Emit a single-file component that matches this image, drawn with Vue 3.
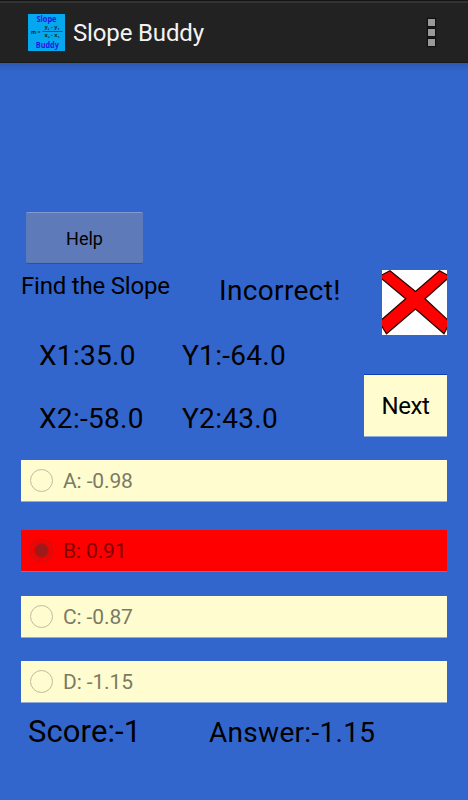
<template>
  <div class="app">
    <header class="action-bar">
      <svg class="logo" width="37" height="37" viewBox="0 0 37 37">
        <rect width="37" height="37" fill="#05a7ef" />
        <g class="logo-name">
          <text x="8.5" y="8" textLength="20" lengthAdjust="spacingAndGlyphs">Slope</text>
          <text x="7.8" y="34.2" textLength="23" lengthAdjust="spacingAndGlyphs">Buddy</text>
        </g>
        <g class="logo-formula">
          <text x="3" y="19.8" textLength="9.500" lengthAdjust="spacingAndGlyphs">m =</text>
          <text x="16.500" y="15" textLength="15" lengthAdjust="spacingAndGlyphs">y₂ - y₁</text>
          <text x="16.500" y="23.2" textLength="15" lengthAdjust="spacingAndGlyphs">x₂ - x₁</text>
        </g>
        <path d="M14.5 17.500H34.500" stroke="#123b55" stroke-width=".8" />
      </svg>
      <h1>Slope Buddy</h1>
      <div class="overflow"><i></i><i></i><i></i></div>
    </header>

    <main>
      <button class="help">Help</button>

      <section class="question">
        <div class="problem">
          <div class="prompt">
            <span class="find">Find the Slope</span>
            <span class="verdict">Incorrect!</span>
          </div>
          <div class="points">
            <span v-for="p in points" :key="p">{{ p }}</span>
          </div>
        </div>
        <div class="side">
          <svg class="cross" width="65" height="65" viewBox="0 0 65 65">
            <rect width="65" height="65" fill="#fff" />
            <path d="M8 .8L33.500 21.500L57.500 .8L68 6.500L43 28.800L68 52L62 63.800L33.500 39L4.500 63.800L-3 52L23.700 28.800L-3 6.500Z" fill="#fe0000" stroke="#220500" stroke-width="1.200" />
          </svg>
          <button class="next">Next</button>
        </div>
      </section>

      <div class="choices">
        <div v-for="c in choices" :key="c.text" class="choice" :class="{ wrong: c.picked }">
          <span class="radio"></span>
          <span class="label">{{ c.text }}</span>
        </div>
      </div>

      <footer>
        <span class="score">Score:-1</span>
        <span class="answer">Answer:-1.15</span>
      </footer>
    </main>
  </div>
</template>

<script setup>
const points = ['X1:35.0', 'Y1:-64.0', 'X2:-58.0', 'Y2:43.0']

const choices = [
  { text: 'A: -0.98' },
  { text: 'B: 0.91', picked: true },
  { text: 'C: -0.87' },
  { text: 'D: -1.15' }
]
</script>

<style>
body { margin: 0; background: #3366cc; }
</style>

<style scoped>
.app { width: 468px; height: 800px; overflow: hidden; background: #3366cc; font-family: Roboto, "Noto Sans", sans-serif; color: #000; white-space: nowrap; }
button { font-family: inherit; color: inherit; padding: 0; border: 0; border-radius: 0; display: block; }

.action-bar { display: flex; align-items: center; box-sizing: border-box; height: 63px; padding: 2px 33px 0 28px; background: #222; border-top: 1px solid #141414; border-bottom: 1px solid #171915; box-shadow: inset 0 2px #333; }
.action-bar h1 { margin: 1px auto 0 8px; font-size: 24px; font-weight: 400; line-height: 38px; letter-spacing: -0.15px; color: #f3f3f3; }
.logo { display: block; }
.logo-name { font: bold 8.8px "Open Sans", sans-serif; fill: #2814e8; }
.logo-formula { font: bold 5.6px "Open Sans", sans-serif; fill: #082c40; }
.overflow { display: flex; flex-direction: column; gap: 3px; }
.overflow i { width: 7px; height: 7px; background: #999; box-shadow: 0 0 1px 1px #111; }

main { height: 737px; box-sizing: border-box; padding: 149px 21px 0 21px; background: linear-gradient(#2c58b0, #3366cc 9px); }
.help { width: 117px; height: 52px; margin-left: 5px; background: #5e7ab8; border-radius: 2px; border-top: 1px solid #839ad0; border-bottom: 1px solid #3b4f80; font-size: 18px; line-height: 52px; }

.question { display: flex; justify-content: space-between; height: 190px; margin-top: 6px; }
.prompt { display: grid; grid-template-columns: 198px auto; height: 54px; }
.find { font-size: 24px; line-height: 32px; letter-spacing: -0.2px; }
.verdict { font-size: 28px; line-height: 42px; letter-spacing: 0.35px; }
.points { display: grid; grid-template-columns: 143px auto; grid-auto-rows: 63px; padding-left: 18px; font-size: 28px; line-height: 64px; letter-spacing: 0.3px; }
.side { display: flex; flex-direction: column; align-items: flex-end; }
.cross { display: block; flex: none; }
.next { width: 83px; height: 63px; margin-top: 39px; background: #fffdd0; border-top: 1px solid #0b40bb; border-bottom: 1px solid #92addc; box-sizing: border-box; font-size: 24px; line-height: 62px; letter-spacing: -0.4px; }

.choices { display: flex; flex-direction: column; }
.choice { display: flex; align-items: center; box-sizing: border-box; height: 42px; padding-left: 9px; background: #fffdd0; border-bottom: 1px solid #92addc; margin-bottom: 23px; }
.choice:first-child { margin-bottom: 28px; }
.choice.wrong { background: #f00; margin-bottom: 24px; border-bottom-color: #b35f83; }
.radio { box-sizing: border-box; width: 23px; height: 23px; border: 1px solid #bebc9c; border-radius: 50%; }
.wrong .radio { border-color: #c11414; background: radial-gradient(circle, #9c1a1a 0 6px, #db0808 7px, #f00 10px); }
.label { margin-left: 10px; font-size: 21px; line-height: 42px; letter-spacing: -0.12px; color: #7b7a65; }
.wrong .label { color: #800000; }

footer { display: grid; grid-template-columns: 181px auto; padding-left: 7px; margin-top: -16px; line-height: 44px; }
.score { font-size: 31px; letter-spacing: 0.1px; }
.answer { font-size: 28px; line-height: 46px; letter-spacing: 0.3px; }
</style>
